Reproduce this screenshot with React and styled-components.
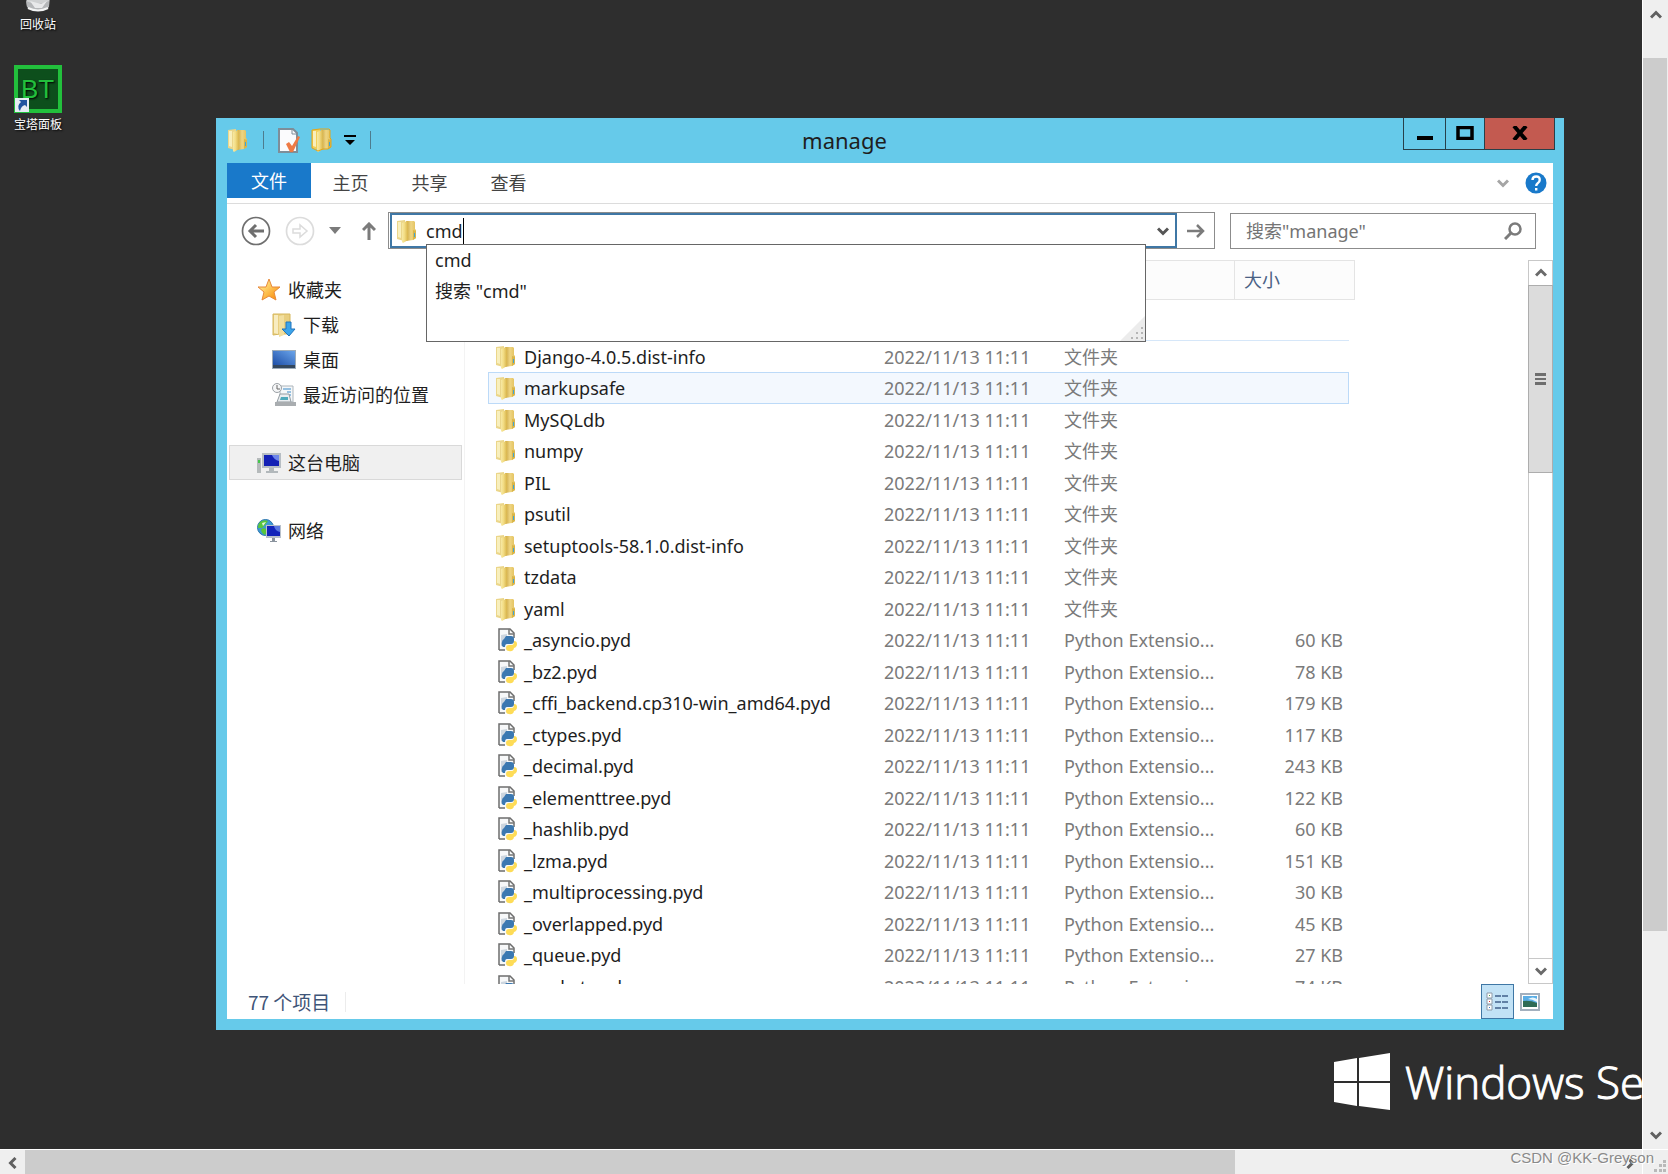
import React from "react";
import styled, { createGlobalStyle } from "styled-components";

const GlobalStyle = createGlobalStyle`
  * {
    box-sizing: border-box;
  }
  body {
    margin: 0;
    background: #fff;
    font-family: "Noto Sans", "Noto Sans CJK SC", sans-serif;
    font-size: 18px;
    line-height: 24px;
    color: #1e1e1e;
  }
  button, input {
    font: inherit;
    color: inherit;
    margin: 0;
    padding: 0;
    border: 0;
    background: none;
  }
  svg {
    display: block;
    flex: none;
  }
`;

const Screen = styled.div`
  position: relative;
  display: grid;
  grid-template-columns: minmax(0, 1fr) 25px;
  grid-template-rows: minmax(0, 1fr) 24px;
  gap: 1px;
  height: 100vh;
  overflow: hidden;
`;

const Desktop = styled.main`
  position: relative;
  overflow: hidden;
  background: #2e2e2e;
`;

const Shortcuts = styled.div`
  display: flex;
  flex-direction: column;
  align-items: center;
  gap: 31px;
  width: 76px;
  margin-top: -35px;
`;

const Shortcut = styled.a`
  display: flex;
  flex-direction: column;
  align-items: center;
  gap: 3px;
  color: #fff;
  font-size: 12px;
  line-height: 18px;
  text-decoration: none;
  text-shadow: 1px 1px 2px #000;
`;

const Brand = styled.div`
  position: absolute;
  left: calc(100% - 308px);
  bottom: 33px;
  display: flex;
  align-items: center;
  gap: 15px;
  color: #fff;
  font-family: "Open Sans", "Noto Sans", sans-serif;
  font-size: 44px;
  font-weight: 300;
  line-height: 68px;
  white-space: nowrap;
  -webkit-text-stroke: 1px #fff;
`;

/* scroll bars around the remote session */
const OuterBar = styled.div`
  display: flex;
  flex-direction: ${(p) => (p.$vertical ? "column" : "row")};
  background: #efefef;
`;

const OuterButton = styled.button`
  display: flex;
  align-items: center;
  justify-content: center;
  flex: none;
  width: 25px;
  height: ${(p) => (p.$vertical ? "29px" : "25px")};
`;

const OuterTrack = styled.div`
  flex: 1;
  display: flex;
  flex-direction: ${(p) => (p.$vertical ? "column" : "row")};
`;

const OuterThumb = styled.div`
  flex: 0 0 ${(p) => p.$size};
  margin-top: ${(p) => (p.$vertical ? "29px" : "0")};
  margin-right: ${(p) => (p.$vertical ? "1px" : "0")};
  background: #ccc;
`;

const Corner = styled.div`
  display: flex;
  align-items: flex-end;
  justify-content: flex-end;
  padding: 2px;
  background: #efefef;
`;

const Watermark = styled.div`
  position: absolute;
  right: 14px;
  bottom: 6px;
  color: #8a8a8a;
  font-family: "Liberation Sans", sans-serif;
  font-size: 15px;
  line-height: 20px;
  text-shadow: 1px 1px 0 #fff;
`;

const Window = styled.section`
  position: absolute;
  top: 118px;
  right: 78px;
  bottom: 119px;
  left: 216px;
  display: flex;
  flex-direction: column;
  padding: 0 11px 11px;
  background: #66caea;
`;

const TitleBar = styled.header`
  display: flex;
  align-items: flex-start;
  height: 45px;
  flex: none;
`;

const QuickAccess = styled.div`
  display: flex;
  align-items: center;
  gap: 11px;
  height: 44px;
`;

const Divider = styled.span`
  width: 1px;
  height: 18px;
  margin: 0 3px;
  background: #4d7c8e;
`;

const Title = styled.h1`
  flex: 1;
  margin: 0;
  padding-right: 88px;
  font-size: 22px;
  font-weight: 400;
  line-height: 44px;
  text-align: center;
`;

const Controls = styled.div`
  display: flex;
  height: 32px;
  margin-right: -2px;
`;

const ControlButton = styled.button`
  display: flex;
  align-items: center;
  justify-content: center;
  width: ${(p) => p.$width};
  padding-bottom: 1px;
  background: ${(p) => (p.$close ? "#c35a50" : "transparent")};
  border: 1px solid #27404a;
  border-top: 0;
  border-right-width: ${(p) => (p.$close ? "1px" : "0")};
`;

const Client = styled.div`
  flex: 1;
  display: flex;
  flex-direction: column;
  min-height: 0;
  background: #fff;
`;

const Ribbon = styled.nav`
  display: flex;
  align-items: center;
  height: 41px;
  flex: none;
  border-bottom: 1px solid #dcdcdc;
  padding-right: 6px;
`;

const FileTab = styled.button`
  align-self: flex-start;
  width: 84px;
  height: 35px;
  background: #1979ca;
  color: #fff;
`;

const RibbonTab = styled.button`
  width: 79px;
  color: #444;
`;

const RibbonTools = styled.div`
  display: flex;
  align-items: center;
  gap: 16px;
  margin-left: auto;
`;

const IconButton = styled.button`
  display: flex;
  align-items: center;
  justify-content: center;
`;

const NavBar = styled.div`
  display: flex;
  align-items: center;
  height: 56px;
  flex: none;
  padding: 0 17px 3px 14px;
`;

const NavButtons = styled.div`
  display: flex;
  align-items: center;
  gap: 14px;
  margin-right: 5px;
`;

const UpButton = styled(IconButton)`
  width: 28px;
`;

const AddressBar = styled.div`
  position: relative;
  display: flex;
  flex: 1;
  height: 37px;
  border: 1px solid #8c8c8c;
`;

const AddressField = styled.label`
  flex: 1;
  display: flex;
  align-items: center;
  margin: 0 0 0 1px;
  padding: 0 6px 0 4px;
  border: 2px solid #3f77a5;
`;

const AddressInput = styled.input`
  field-sizing: content;
  margin-left: 8px;
  outline: 0;
`;

const Caret = styled.span`
  width: 1px;
  height: 26px;
  margin-right: auto;
  background: #000;
`;

const GoButton = styled(IconButton)`
  width: 37px;
`;

const Suggestions = styled.ul`
  position: absolute;
  z-index: 1;
  top: 31px;
  left: 37px;
  right: 68px;
  height: 98px;
  margin: 0;
  padding: 0 0 0 8px;
  list-style: none;
  background: #fff;
  border: 1px solid #666;
`;

const Suggestion = styled.li`
  line-height: 31px;
`;

const ResizeCorner = styled.span`
  position: absolute;
  right: 0;
  bottom: 0;
`;

const SearchBox = styled.label`
  display: flex;
  align-items: center;
  width: 306px;
  height: 36px;
  margin-left: 15px;
  padding: 0 13px 0 15px;
  border: 1px solid #8c8c8c;
`;

const SearchInput = styled.input`
  flex: 1;
  min-width: 0;
  &::placeholder {
    color: #747474;
    opacity: 1;
  }
`;

const Body = styled.div`
  flex: 1;
  display: flex;
  min-height: 0;
`;

const Sidebar = styled.aside`
  flex: none;
  width: 238px;
  padding: 12px 2px 0;
  border-right: 1px solid #f3f3f3;
`;

const PlaceLink = styled.a`
  display: flex;
  align-items: center;
  gap: 7px;
  height: 35px;
  margin-bottom: ${(p) => (p.$last ? "33px" : "0")};
  padding-left: ${(p) => (p.$nested ? "42px" : "27px")};
  border: 1px solid ${(p) => (p.$selected ? "#d9d9d9" : "transparent")};
  background: ${(p) => (p.$selected ? "#f0f0f0" : "transparent")};
  color: inherit;
  text-decoration: none;
`;

const FilePane = styled.div`
  flex: 1;
  min-width: 0;
  overflow: hidden;
  padding-left: 23px;
`;

const FileTable = styled.table`
  width: 867px;
  table-layout: fixed;
  border-collapse: separate;
  border-spacing: 0;
`;

const HeadCell = styled.th`
  height: 40px;
  padding: 0 0 0 9px;
  border: 1px solid #e4e4e4;
  border-left-width: 0;
  background: #fcfcfc;
  color: #4a6184;
  font-weight: 400;
  text-align: left;
`;

const GroupEdge = styled.td`
  height: 41px;
  padding: 0;
  border-bottom: 1px solid #d6e7f9;
`;

const Cell = styled.td`
  padding: 0 ${(p) => (p.$right ? "6px" : "0")} 0 10px;
  color: #7a7a7a;
  line-height: 24px;
  text-align: ${(p) => (p.$right ? "right" : "left")};
  white-space: nowrap;
`;

const NameCell = styled(Cell)`
  padding-left: 7px;
  color: #1e1e1e;
`;

const FileName = styled.span`
  display: flex;
  align-items: center;
  gap: 7px;
`;

const FileRow = styled.tr`
  height: 31px;
  &:nth-child(odd) {
    height: 32px;
  }
  ${Cell} {
    border-style: solid;
    border-color: #bcdaf8;
    border-width: ${(p) => (p.$hot ? "1px 0" : "0")};
    background: ${(p) => (p.$hot ? "#f3f8fe" : "transparent")};
  }
  ${Cell}:first-child {
    padding-left: ${(p) => (p.$hot ? "6px" : "7px")};
    border-left-width: ${(p) => (p.$hot ? "1px" : "0")};
  }
  ${Cell}:last-child {
    padding-right: ${(p) => (p.$hot ? "5px" : "6px")};
    border-right-width: ${(p) => (p.$hot ? "1px" : "0")};
  }
`;

const ScrollBar = styled.div`
  display: flex;
  flex-direction: column;
  width: 25px;
  border: 1px solid #c8c8c8;
`;

const ScrollButton = styled(IconButton)`
  height: 24px;
  flex: none;
`;

const ScrollThumb = styled.div`
  display: flex;
  align-items: center;
  justify-content: center;
  flex: 0 0 188px;
  margin: 0 -1px;
  border: 1px solid #adadad;
  background: #dcdcdc;
`;

const ScrollSpace = styled.div`
  flex: 1;
  border-bottom: 1px solid #c8c8c8;
`;

const StatusBar = styled.footer`
  display: flex;
  align-items: center;
  height: 35px;
  flex: none;
  padding: 0 12px 0 21px;
  color: #3f5578;
`;

const ItemCount = styled.span`
  padding-right: 15px;
  border-right: 1px solid #ececec;
  font-family: "Noto Sans CJK SC", sans-serif;
  font-size: 19px;
  line-height: 20px;
`;

const ViewButtons = styled.div`
  display: flex;
  align-items: center;
  align-self: stretch;
  gap: 5px;
  margin-left: auto;
`;

const ViewButton = styled(IconButton)`
  height: 35px;
  width: ${(p) => (p.$active ? "33px" : "22px")};
  border: ${(p) => (p.$active ? "1px solid #3f77a5" : "0")};
  background: ${(p) => (p.$active ? "#c2e2f6" : "transparent")};
`;

const FolderIcon = ({ strong }) => (
  <svg width="22" height="24" viewBox="0 0 22 24">
    <defs>
      <linearGradient id="flap">
        <stop offset="0" stopColor="#f7e9a4" />
        <stop offset="0.4" stopColor="#f3dd85" />
        <stop offset="1" stopColor="#d8b44a" />
      </linearGradient>
      <linearGradient id="back">
        <stop offset="0" stopColor="#c9a23c" />
        <stop offset="0.5" stopColor="#eed583" />
        <stop offset="1" stopColor="#e3c05a" />
      </linearGradient>
    </defs>
    <path d="M10 2h8l1 1v7l1 1v8l-3 2-7 1z" fill="url(#back)" />
    <path d="M17 11l3 1v7l-3 2z" fill="#d9b548" />
    <path d="M1 2l8-1v3l-1 18-7-2z" fill={strong ? "#f2cf58" : "#ebd68a"} />
    <path d="M2 3h3v16l-3-1z" fill="#f8efbd" />
    <path d="M6 4l5-2 1 1v18l-5 3-1-1z" fill="url(#flap)" />
    {strong && (
      <path d="M1 2l8-1h9l1 1v8l1 1v8l-3 2h-5l-5 2-6-3z" fill="none" stroke="#e3a61a" />
    )}
    <path d="M18 14h1v4h-1z" fill="#3fa5d8" />
  </svg>
);

const PythonIcon = () => (
  <svg width="22" height="24" viewBox="0 0 22 24">
    <path d="M4 1h11l4 4v17H4z" fill="#f7f8f9" />
    <path d="M4 22V1h11l4 4v5M4 22h6" fill="none" stroke="#6d6d6d" strokeWidth="1.500" />
    <path d="M14 1v5h5" fill="none" stroke="#777" strokeWidth="1.500" />
    <path d="M6 7l6-1v5l-5 2v5H6z" fill="#cdd6df" />
    <path d="M11 8h5q3 0 3 3v2q0 3-3 3h-4q-2 0-2 3H8q-2-2-1-5 0-2 2-3z" fill="#3b78b1" />
    <path d="M19 13q3 0 3 3 0 3-3 4-1 4-5 3-3 0-3-3 0-3 3-3h3q2 0 2-4z" fill="#fedc57" />
  </svg>
);

const StarIcon = () => (
  <svg width="24" height="24" viewBox="0 0 24 24">
    <defs>
      <linearGradient id="star" x1="0" y1="0" x2="1" y2="1">
        <stop offset="0.2" stopColor="#ffe88a" />
        <stop offset="0.8" stopColor="#fb9c1e" />
      </linearGradient>
    </defs>
    <path d="M12 1l3 8h8l-6 5 2 8-7-4-7 4 2-8-6-5h8z" fill="url(#star)" stroke="#e8893a" />
  </svg>
);

const DownloadsIcon = () => (
  <svg width="24" height="26" viewBox="0 0 24 26">
    <path d="M1 2h17v20H8l-7 1z" fill="#e9cf80" stroke="#d6b75c" />
    <path d="M2 3h4v19l-4-1z" fill="#f8ecc0" />
    <path d="M7 4l5-1v20l-5 2z" fill="#f2df9f" />
    <path d="M14 10h5v7h4l-6 7-7-7h4z" fill="#3ca4ea" stroke="#2175bd" />
  </svg>
);

const DesktopIcon = () => (
  <svg width="24" height="20" viewBox="0 0 24 20">
    <defs>
      <linearGradient id="screen" x1="0" y1="1" x2="1" y2="0">
        <stop offset="0" stopColor="#1e4fa8" />
        <stop offset="1" stopColor="#6aa4ea" />
      </linearGradient>
    </defs>
    <path d="M0 0h24v19H0z" fill="#9cabb9" />
    <path d="M1 1h22v14H1z" fill="url(#screen)" />
    <path d="M1 15h22v3H1z" fill="#33475d" />
  </svg>
);

const RecentIcon = () => (
  <svg width="24" height="24" viewBox="0 0 24 24">
    <path d="M8 3h13v16H8z" fill="#f4f7f9" stroke="#adb5bb" />
    <path d="M11 6h8M15 9h4M11 12h8" stroke="#77aed8" strokeWidth="1.500" />
    <path d="M5 19l3-8h9l2 8z" fill="#e9edf0" stroke="#959da3" />
    <path d="M9 14h7v3H8z" fill="#4ea9bb" />
    <path d="M3 19h21v4H3z" fill="#a9adb0" />
    <circle cx="5" cy="5" r="4.500" fill="#f5f6f7" stroke="#9ba1a6" />
    <path d="M5 2v4h3" fill="none" stroke="#666" />
  </svg>
);

const ComputerIcon = () => (
  <svg width="24" height="22" viewBox="0 0 24 22">
    <path d="M0 6h4v15H0z" fill="#b5babb" />
    <path d="M1 8h2v3H1z" fill="#44c64b" />
    <path d="M5 1h19v15H5z" fill="#b7bec4" />
    <path d="M7 3h15v11H7z" fill="#1320b5" />
    <path d="M15 3h7v6q-5-1-7-6z" fill="#6d86ea" />
    <path d="M12 16h5v3h4v2H9v-2h3z" fill="#b2b8bb" />
  </svg>
);

const NetworkIcon = () => (
  <svg width="24" height="24" viewBox="0 0 24 24">
    <circle cx="8.500" cy="8.500" r="8" fill="#3d9ad4" stroke="#2b74ad" />
    <path d="M3 3q4-3 8-1l-3 4-3 3H1q0-4 2-6zM7 9l4 2-3 5q-4-2-4-6z" fill="#58c63c" />
    <path d="M5 4l4-1-3 4z" fill="#e4f6df" />
    <path d="M9 6h15v13H9z" fill="#b9c1cb" />
    <path d="M10 7h13v10H10z" fill="#1324ba" />
    <path d="M17 7h6v6q-5-1-6-6z" fill="#5a78e0" />
    <path d="M15 19h3v3h2v1h-7v-1h2z" fill="#8b949e" />
  </svg>
);

const RecycleBinIcon = () => (
  <svg width="48" height="48" viewBox="0 0 48 48">
    <path d="M10 4h28l-3 38q-11 7-22 0z" fill="#cfd1d2" />
    <path d="M12 36q12 6 23 0v6q-11 7-22 0z" fill="#b4b6b8" />
    <path d="M16 36l5 7h7l5-7-6 3z" fill="#e8e9ea" />
    <path d="M14 43q10 5 20 0" fill="none" stroke="#f3f4f4" strokeWidth="2" />
  </svg>
);

const PanelIcon = () => (
  <svg width="48" height="48" viewBox="0 0 48 48">
    <path d="M2 2h44v44H2z" fill="#0d4f1c" stroke="#22c03c" strokeWidth="4" />
    <text x="7" y="33" fill="#22c03c" fontFamily="Liberation Sans, sans-serif" fontSize="26">
      BT
    </text>
    <path d="M1 33h14v14H1z" fill="#e6ecf3" />
    <path d="M6 46q-4-5 1-9l-2-2h8v7l-2-2q-4 1-5 6z" fill="#21549f" />
  </svg>
);

const WindowsLogo = () => (
  <svg width="56" height="58" viewBox="0 0 56 58">
    <path
      d="M0 9l23-4v23H0zM25 5l31-5v28H25zM0 30h23v23l-23-4zM25 30h31v27l-31-4z"
      fill="#fff"
    />
  </svg>
);

const PropertiesIcon = () => (
  <svg width="22" height="25" viewBox="0 0 22 25">
    <path d="M1 1h14l4 4v19H1z" fill="#fbfbfd" stroke="#7e8e99" strokeWidth="2" />
    <path d="M14 1v5h5" fill="none" stroke="#7e8e99" />
    <path d="M8 16l3-2 3 4 6-10 2 1-7 15h-3z" fill="#ee7a45" />
  </svg>
);

const Chevron = ({ dir = "down", color = "#6a6a6a", size = 12, weight = 3 }) => {
  const turn = { down: 0, left: 90, up: 180, right: 270 }[dir];
  return (
    <svg width={size} height={size} viewBox="0 0 12 12">
      <path
        d="M1 3.500l5 5 5-5"
        fill="none"
        stroke={color}
        strokeWidth={weight}
        transform={`rotate(${turn} 6 6)`}
      />
    </svg>
  );
};

const RoundArrow = ({ color, hollow }) => (
  <svg width="30" height="30" viewBox="0 0 30 30">
    <circle cx="15" cy="15" r="13.500" fill="none" stroke={color} strokeWidth="1.700" />
    {hollow ? (
      <path d="M8 13h7V9l7 6-7 6v-4H8z" fill="none" stroke={color} strokeWidth="1.500" />
    ) : (
      <path d="M23 15H9m6-6l-6 6 6 6" fill="none" stroke={color} strokeWidth="3" />
    )}
  </svg>
);

const stamp = "2022/11/13 11:11";
const folders = [
  "Django-4.0.5.dist-info",
  "markupsafe",
  "MySQLdb",
  "numpy",
  "PIL",
  "psutil",
  "setuptools-58.1.0.dist-info",
  "tzdata",
  "yaml",
];
const modules = [
  ["_asyncio.pyd", "60 KB"],
  ["_bz2.pyd", "78 KB"],
  ["_cffi_backend.cp310-win_amd64.pyd", "179 KB"],
  ["_ctypes.pyd", "117 KB"],
  ["_decimal.pyd", "243 KB"],
  ["_elementtree.pyd", "122 KB"],
  ["_hashlib.pyd", "60 KB"],
  ["_lzma.pyd", "151 KB"],
  ["_multiprocessing.pyd", "30 KB"],
  ["_overlapped.pyd", "45 KB"],
  ["_queue.pyd", "27 KB"],
  ["_socket.pyd", "74 KB"],
];
const files = [
  ...folders.map((name) => ({ name, type: "文件夹", size: "", Icon: FolderIcon })),
  ...modules.map(([name, size]) => ({ name, size, type: "Python Extensio...", Icon: PythonIcon })),
];

const places = [
  { name: "收藏夹", Icon: StarIcon },
  { name: "下载", Icon: DownloadsIcon, nested: true },
  { name: "桌面", Icon: DesktopIcon, nested: true },
  { name: "最近访问的位置", Icon: RecentIcon, nested: true, last: true },
  { name: "这台电脑", Icon: ComputerIcon, selected: true, last: true },
  { name: "网络", Icon: NetworkIcon },
];

function TitleRow() {
  return (
    <TitleBar>
      <QuickAccess>
        <FolderIcon />
        <Divider />
        <IconButton aria-label="属性">
          <PropertiesIcon />
        </IconButton>
        <IconButton aria-label="新建文件夹">
          <FolderIcon strong />
        </IconButton>
        <IconButton aria-label="自定义快速访问工具栏">
          <svg width="12" height="10" viewBox="0 0 12 10">
            <path d="M0 0h12v2H0zM1 5h10l-5 5z" fill="#000" />
          </svg>
        </IconButton>
        <Divider />
      </QuickAccess>
      <Title>manage</Title>
      <Controls>
        <ControlButton $width="42px" aria-label="最小化">
          <svg width="16" height="14" viewBox="0 0 16 14">
            <path d="M0 10h16v4H0z" />
          </svg>
        </ControlButton>
        <ControlButton $width="39px" aria-label="最大化">
          <svg width="18" height="14" viewBox="0 0 18 14">
            <path d="M2 1.500h14v11H2z" fill="none" stroke="#000" strokeWidth="3.500" />
          </svg>
        </ControlButton>
        <ControlButton $width="71px" $close aria-label="关闭">
          <svg width="16" height="14" viewBox="0 0 16 14">
            <path d="M2 0l12 14M14 0L2 14" stroke="#000" strokeWidth="4" />
          </svg>
        </ControlButton>
      </Controls>
    </TitleBar>
  );
}

function Navigation() {
  return (
    <NavBar>
      <NavButtons>
        <IconButton aria-label="后退">
          <RoundArrow color="#6f6f6f" />
        </IconButton>
        <IconButton aria-label="前进">
          <RoundArrow color="#dcdcdc" hollow />
        </IconButton>
        <IconButton aria-label="最近浏览的位置">
          <svg width="12" height="7" viewBox="0 0 12 7">
            <path d="M0 0h12L6 7z" fill="#7b7b7b" />
          </svg>
        </IconButton>
        <UpButton aria-label="上移">
          <svg width="14" height="18" viewBox="0 0 14 18">
            <path d="M7 18V2M1 8l6-6 6 6" fill="none" stroke="#7b7b7b" strokeWidth="3" />
          </svg>
        </UpButton>
      </NavButtons>
      <AddressBar>
        <AddressField>
          <FolderIcon />
          <AddressInput aria-label="地址" defaultValue="cmd" />
          <Caret />
          <Chevron color="#555" />
        </AddressField>
        <GoButton aria-label="转到">
          <svg width="18" height="14" viewBox="0 0 18 14">
            <path d="M0 7h16M10 1l6 6-6 6" fill="none" stroke="#7b7b7b" strokeWidth="2.500" />
          </svg>
        </GoButton>
        <Suggestions>
          <Suggestion>cmd</Suggestion>
          <Suggestion>搜索 "cmd"</Suggestion>
          <ResizeCorner>
            <svg width="25" height="25" viewBox="0 0 25 25">
              <path d="M25 0v25H0z" fill="#ececec" />
              <path
                d="M21 11h2v2h-2zM21 16h2v2h-2zM16 16h2v2h-2zM21 21h2v2h-2zM16 21h2v2h-2zM11 21h2v2h-2z"
                fill="#b5b5b5"
              />
            </svg>
          </ResizeCorner>
        </Suggestions>
      </AddressBar>
      <SearchBox>
        <SearchInput aria-label="搜索" placeholder={'搜索"manage"'} />
        <svg width="18" height="18" viewBox="0 0 18 18">
          <circle cx="11" cy="7" r="5.500" fill="none" stroke="#7b7b7b" strokeWidth="2.500" />
          <path d="M7 11l-6 6" stroke="#7b7b7b" strokeWidth="3" />
        </svg>
      </SearchBox>
    </NavBar>
  );
}

function FileList() {
  return (
    <FilePane>
      <FileTable>
        <colgroup>
          <col width="386" />
          <col width="180" />
          <col width="181" />
          <col width="114" />
          <col width="6" />
        </colgroup>
        <thead>
          <tr>
            <HeadCell aria-label="名称" />
            <HeadCell aria-label="修改日期" />
            <HeadCell aria-label="类型" />
            <HeadCell colSpan={2}>大小</HeadCell>
          </tr>
        </thead>
        <tbody>
          <tr>
            <GroupEdge colSpan={4} />
          </tr>
          {files.map(({ name, type, size, Icon }) => (
            <FileRow key={name} $hot={name === "markupsafe"}>
              <NameCell>
                <FileName>
                  <Icon />
                  {name}
                </FileName>
              </NameCell>
              <Cell>{stamp}</Cell>
              <Cell>{type}</Cell>
              <Cell $right>{size}</Cell>
            </FileRow>
          ))}
        </tbody>
      </FileTable>
    </FilePane>
  );
}

function Explorer() {
  return (
    <Window>
      <TitleRow />
      <Client>
        <Ribbon>
          <FileTab>文件</FileTab>
          <RibbonTab>主页</RibbonTab>
          <RibbonTab>共享</RibbonTab>
          <RibbonTab>查看</RibbonTab>
          <RibbonTools>
            <IconButton aria-label="展开功能区">
              <Chevron color="#a5a5a5" />
            </IconButton>
            <IconButton aria-label="帮助">
              <svg width="22" height="22" viewBox="0 0 22 22">
                <circle cx="11" cy="11" r="10.500" fill="#1979ca" />
                <path
                  d="M7.500 8q0-3.500 3.700-3.500T14.700 8q0 2-2 3.200-1.500 1-1.500 2.800M11.200 16v2.500"
                  fill="none"
                  stroke="#fff"
                  strokeWidth="2.400"
                />
              </svg>
            </IconButton>
          </RibbonTools>
        </Ribbon>
        <Navigation />
        <Body>
          <Sidebar>
            {places.map(({ name, Icon, nested, last, selected }) => (
              <PlaceLink key={name} href="#" $nested={nested} $last={last} $selected={selected}>
                <Icon />
                {name}
              </PlaceLink>
            ))}
          </Sidebar>
          <FileList />
          <ScrollBar>
            <ScrollButton aria-label="向上滚动">
              <Chevron dir="up" />
            </ScrollButton>
            <ScrollThumb>
              <svg width="11" height="12" viewBox="0 0 11 12">
                <path d="M0 0h11v3H0zM0 5h11v2H0zM0 9h11v3H0z" fill="#6e6e6e" />
              </svg>
            </ScrollThumb>
            <ScrollSpace />
            <ScrollButton aria-label="向下滚动">
              <Chevron />
            </ScrollButton>
          </ScrollBar>
        </Body>
        <StatusBar>
          <ItemCount>77 个项目</ItemCount>
          <ViewButtons>
            <ViewButton $active aria-label="详细信息">
              <svg width="23" height="20" viewBox="0 0 23 20">
                <path
                  d="M1 1h5v5H1zM1 7h5v5H1zM1 13h5v5H1z"
                  fill="#fff"
                  stroke="#8d9aa8"
                />
                <path d="M3 3h1v1H3z" fill="#4b9b4b" />
                <path d="M3 9h1v1H3z" fill="#d33" />
                <path d="M3 15h1v1H3z" fill="#37c" />
                <path
                  d="M9 4h6M16 4h6M9 10h6M16 10h6M9 16h6M16 16h6"
                  stroke="#6180a5"
                  strokeWidth="2"
                />
              </svg>
            </ViewButton>
            <ViewButton aria-label="大图标">
              <svg width="20" height="18" viewBox="0 0 20 18">
                <path d="M1 1h18v16H1z" fill="#fff" stroke="#a3b0be" strokeWidth="2" />
                <path d="M3 3h14v11H3z" fill="#5aaee6" />
                <path d="M3 8q7-1 14 2v4H3z" fill="#2f6b55" />
                <path d="M8 6q5-3 9 0v3q-5-3-9-3z" fill="#e8f5fc" />
              </svg>
            </ViewButton>
          </ViewButtons>
        </StatusBar>
      </Client>
    </Window>
  );
}

function App() {
  return (
    <Screen>
      <GlobalStyle />
      <Desktop>
        <Shortcuts>
          <Shortcut href="#">
            <RecycleBinIcon />
            回收站
          </Shortcut>
          <Shortcut href="#">
            <PanelIcon />
            宝塔面板
          </Shortcut>
        </Shortcuts>
        <Brand>
          <WindowsLogo />
          Windows Server
        </Brand>
        <Explorer />
      </Desktop>
      <OuterBar $vertical>
        <OuterButton $vertical aria-label="向上">
          <Chevron dir="up" color="#606060" />
        </OuterButton>
        <OuterTrack $vertical>
          <OuterThumb $vertical $size="80%" />
        </OuterTrack>
        <OuterButton $vertical aria-label="向下">
          <Chevron color="#606060" />
        </OuterButton>
      </OuterBar>
      <OuterBar>
        <OuterButton aria-label="向左">
          <Chevron dir="left" color="#606060" />
        </OuterButton>
        <OuterTrack>
          <OuterThumb $size="76%" />
        </OuterTrack>
        <OuterButton aria-label="向右">
          <Chevron dir="right" color="#606060" />
        </OuterButton>
      </OuterBar>
      <Corner>
        <svg width="12" height="12" viewBox="0 0 12 12">
          <path
            d="M9 0h3v3H9zM5 4h3v3H5zM9 4h3v3H9zM0 9h3v3H0zM5 9h3v3H5zM9 9h3v3H9z"
            fill="#b9b9b9"
          />
        </svg>
      </Corner>
      <Watermark>CSDN @KK-Greyson</Watermark>
    </Screen>
  );
}

export default App;
